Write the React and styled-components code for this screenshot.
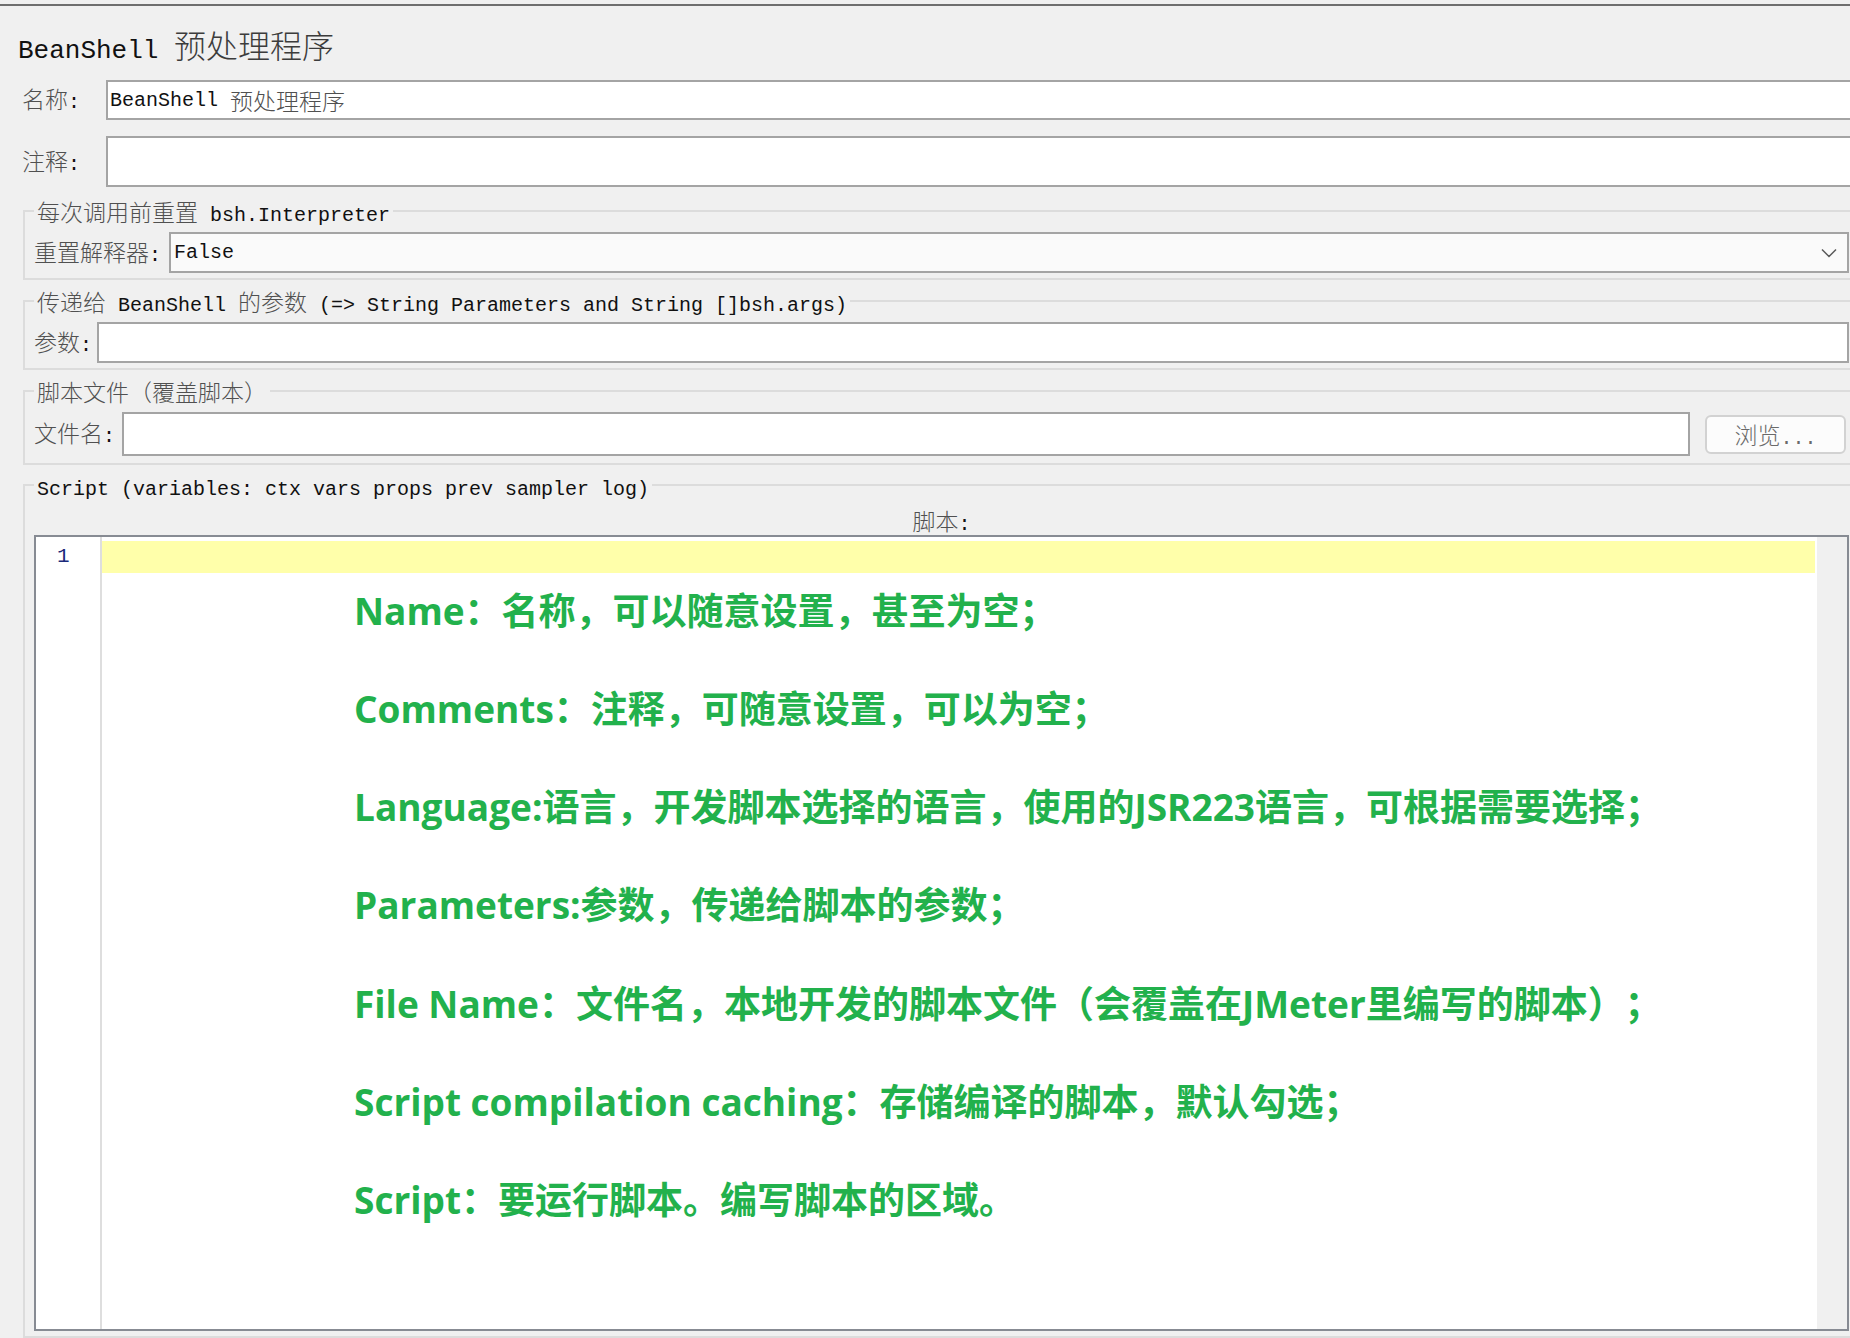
import React from 'react';
import styled, { createGlobalStyle } from 'styled-components';

const GlobalStyle = createGlobalStyle`
  html, body { margin: 0; padding: 0; background: #f0f0f0; overflow: hidden; }
  #root { width: 1850px; height: 1338px; overflow: hidden; }
`;

const HAN_FONT = `"Noto Sans CJK SC", "Noto Sans", sans-serif`;
const MONO_FONT = `"Liberation Mono", "DejaVu Sans Mono", monospace`;

const Page = styled.div`
  width: 1862px;
  height: 1338px;
  display: flex;
  flex-direction: column;
  font-family: ${HAN_FONT};
  font-size: 23px;
  font-weight: 300;
  color: #505050;
`;

const TopRule = styled.div`
  height: 2px;
  margin-top: 4px;
  background: #6e6e6e;
  flex: none;
`;

const Title = styled.h1`
  margin: 15px 0 0 18px;
  height: 46px;
  line-height: 46px;
  font-size: 32px;
  font-weight: 300;
  color: #3c3c3c;
  white-space: nowrap;
  flex: none;
`;

const Lat = styled.span`
  font-family: ${MONO_FONT};
  font-size: ${(p) => p.$size || 20}px;
  font-weight: 400;
  color: #111;
  white-space: pre;
`;

const Han = styled.span`
  white-space: pre;
`;

const HAN_RE = /([\u2E80-\u9FFF\u3000-\u303F\uFF00-\uFFEF]+)/;

function Mixed({ text, size }) {
  return text
    .split(HAN_RE)
    .filter(Boolean)
    .map((part, i) =>
      HAN_RE.test(part) ? (
        <Han key={i}>{part}</Han>
      ) : (
        <Lat key={i} $size={size}>
          {part}
        </Lat>
      )
    );
}

const FieldRow = styled.div`
  display: flex;
  align-items: center;
  margin-top: ${(p) => p.$top}px;
  padding-left: 22px;
  flex: none;
`;

const RowLabel = styled.label`
  width: ${(p) => p.$w}px;
  flex: none;
  white-space: nowrap;
  line-height: 1;
`;

const TextBox = styled.div`
  flex: 1;
  min-width: 0;
  height: ${(p) => p.$h}px;
  box-sizing: border-box;
  border: 2px solid #a4a4a4;
  background: #fff;
  display: flex;
  align-items: center;
  padding-left: 2px;
  white-space: nowrap;
  overflow: hidden;
`;

const Group = styled.fieldset`
  margin: ${(p) => p.$top}px 0 0 23px;
  padding: 10px 11px ${(p) => p.$pb}px 9px;
  border: 2px solid #dcdcdc;
  min-width: 0;
  flex: none;
  display: flex;
  flex-direction: column;
`;

const Legend = styled.legend`
  padding: 0 3px;
  height: 22px;
  line-height: 22px;
  white-space: nowrap;
`;

const GroupRow = styled.div`
  display: flex;
  align-items: center;
`;

const ComboBox = styled.div`
  flex: 1;
  height: 41px;
  box-sizing: border-box;
  border: 2px solid #a4a4a4;
  background: #fafafa;
  display: flex;
  align-items: center;
  justify-content: space-between;
  padding: 0 10px 0 3px;
`;

const BrowseButton = styled.button`
  flex: none;
  width: 141px;
  height: 39px;
  margin: 0 3px 0 15px;
  box-sizing: border-box;
  border: 2px solid #d2d2d2;
  border-radius: 6px;
  background: #fcfcfc;
  font-family: ${HAN_FONT};
  font-size: 23px;
  font-weight: 300;
  line-height: 35px;
  color: #6a6a6a;
  padding: 0;
  text-align: center;
  white-space: nowrap;
  & span { color: #6a6a6a; }
`;

const ScriptCaption = styled.div`
  height: 29px;
  line-height: 29px;
  text-align: center;
  white-space: nowrap;
`;

const Editor = styled.div`
  height: 796px;
  box-sizing: border-box;
  border: 2px solid #878b93;
  display: flex;
  background: #fff;
`;

const Gutter = styled.div`
  width: 64px;
  flex: none;
  border-right: 2px solid #dedede;
  background: #fff;
`;

const LineNumber = styled.div`
  margin-top: 4px;
  height: 32px;
  line-height: 32px;
  padding-left: 21px;
  font-family: ${MONO_FONT};
  font-size: 21px;
  font-weight: 400;
  color: #1b2a7a;
`;

const TextArea = styled.div`
  flex: 1;
  min-width: 0;
  background: #fff;
  display: flex;
  flex-direction: column;
`;

const CurrentLine = styled.div`
  margin: 4px 2px 0 0;
  height: 32px;
  background: #ffffaa;
  flex: none;
`;

const ScrollStrip = styled.div`
  width: 30px;
  flex: none;
  background: #f0f0f0;
`;

const Notes = styled.div`
  margin-top: 13px;
  padding-left: 252px;
  display: flex;
  flex-direction: column;
  gap: 48.13px;
`;

const NoteLine = styled.div`
  height: 50px;
  line-height: 50px;
  font-family: "Open Sans", "Noto Sans CJK SC", sans-serif;
  font-size: 37px;
  font-weight: 700;
  color: #22b14c;
  white-space: nowrap;
  text-spacing-trim: space-all;
`;

const Chevron = () => (
  <svg width="16" height="10" viewBox="0 0 16 10">
    <polyline points="1,1.5 8,8.5 15,1.5" fill="none" stroke="#5a5a5a" strokeWidth="1.5" />
  </svg>
);

const notes = [
  'Name：名称，可以随意设置，甚至为空；',
  'Comments：注释，可随意设置，可以为空；',
  'Language:语言，开发脚本选择的语言，使用的JSR223语言，可根据需要选择；',
  'Parameters:参数，传递给脚本的参数；',
  'File Name：文件名，本地开发的脚本文件（会覆盖在JMeter里编写的脚本）；',
  'Script compilation caching：存储编译的脚本，默认勾选；',
  'Script：要运行脚本。编写脚本的区域。',
];

export default function App() {
  return (
    <>
      <GlobalStyle />
      <Page>
        <TopRule />
        <Title>
          <Mixed text="BeanShell 预处理程序" size={26} />
        </Title>

        <FieldRow $top={13}>
          <RowLabel $w={84}>
            <Mixed text="名称:" />
          </RowLabel>
          <TextBox $h={40}>
            <Mixed text="BeanShell 预处理程序" />
          </TextBox>
        </FieldRow>

        <FieldRow $top={16}>
          <RowLabel $w={84}>
            <Mixed text="注释:" />
          </RowLabel>
          <TextBox $h={51} />
        </FieldRow>

        <Group $top={13} $pb={5}>
          <Legend>
            <Mixed text="每次调用前重置 bsh.Interpreter" />
          </Legend>
          <GroupRow>
            <RowLabel $w={135}>
              <Mixed text="重置解释器:" />
            </RowLabel>
            <ComboBox>
              <Mixed text="False" />
              <Chevron />
            </ComboBox>
          </GroupRow>
        </Group>

        <Group $top={10} $pb={5}>
          <Legend>
            <Mixed text="传递给 BeanShell 的参数 (=> String Parameters and String []bsh.args)" />
          </Legend>
          <GroupRow>
            <RowLabel $w={63}>
              <Mixed text="参数:" />
            </RowLabel>
            <TextBox $h={41} />
          </GroupRow>
        </Group>

        <Group $top={10} $pb={7}>
          <Legend>
            <Mixed text="脚本文件（覆盖脚本）" />
          </Legend>
          <GroupRow>
            <RowLabel $w={88}>
              <Mixed text="文件名:" />
            </RowLabel>
            <TextBox $h={44} />
            <BrowseButton type="button">
              浏览<Lat>...</Lat>
            </BrowseButton>
          </GroupRow>
        </Group>

        <Group $top={9} $pb={5}>
          <Legend>
            <Mixed text="Script (variables: ctx vars props prev sampler log)" />
          </Legend>
          <ScriptCaption>
            <Mixed text="脚本:" />
          </ScriptCaption>
          <Editor>
            <Gutter>
              <LineNumber>1</LineNumber>
            </Gutter>
            <TextArea>
              <CurrentLine />
              <Notes>
                {notes.map((n) => (
                  <NoteLine key={n}>{n}</NoteLine>
                ))}
              </Notes>
            </TextArea>
            <ScrollStrip />
          </Editor>
        </Group>
      </Page>
    </>
  );
}
